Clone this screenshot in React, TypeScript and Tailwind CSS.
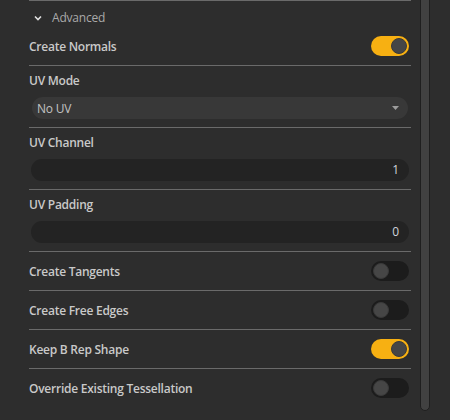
import React from "react";

const font = { fontFamily: '"Open Sans", "Noto Sans", sans-serif' };

function Toggle({ on }: { on: boolean }) {
  return (
    <div
      className={`mr-[2px] flex h-[20px] w-[38px] items-center rounded-full px-[2px] ${
        on ? "justify-end bg-[#f7b012]" : "justify-start bg-[#1c1c1c]"
      }`}
    >
      <div className="h-[16px] w-[16px] rounded-full border border-[#3a3a3a] bg-[#464646]" />
    </div>
  );
}

function Divider() {
  return <div className="h-px bg-[#6a6a6a]" />;
}

function ToggleRow({ label, on }: { label: string; on: boolean }) {
  return (
    <div className="flex h-[38px] items-center justify-between">
      <span className="pt-[2px] text-[12px] font-semibold tracking-[-0.25px] text-[#c9c9c9]">
        {label}
      </span>
      <Toggle on={on} />
    </div>
  );
}

function NumberField({ label, value }: { label: string; value: string }) {
  return (
    <div className="pt-[7px] pb-[8px]">
      <div className="h-[16px] text-[12px] leading-[16px] font-semibold tracking-[-0.25px] text-[#c9c9c9]">
        {label}
      </div>
      <div className="mx-[2px] mt-[8px] flex h-[22px] items-center justify-end rounded-full bg-[#232323] pr-[10px] text-[12px] text-[#cfd4dc]">
        {value}
      </div>
    </div>
  );
}

export default function App() {
  return (
    <div className="flex h-[420px] w-[450px] overflow-hidden bg-[#2d2d2d]" style={font}>
      <div className="ml-[29px] w-[382px] flex-none">
        <Divider />
        {/* Advanced header */}
        <div className="flex h-[26px] items-center gap-[10px] pt-[7px] pl-[5px]">
          <svg width="8" height="6" viewBox="0 0 8 6" className="text-[#e0e0e0]">
            <path d="M1 1.5 L4 4.5 L7 1.5" fill="none" stroke="currentColor" strokeWidth="1.6" />
          </svg>
          <span className="pt-[1px] text-[12px] tracking-[-0.2px] text-[#a9a9a9]">Advanced</span>
        </div>
        <ToggleRow label="Create Normals" on />
        <Divider />

        {/* UV Mode */}
        <div className="pt-[7px] pb-[8px]">
          <div className="h-[16px] text-[12px] leading-[16px] font-semibold tracking-[-0.25px] text-[#c9c9c9]">
            UV Mode
          </div>
          <div className="mx-[3px] mt-[8px] flex h-[22px] items-center justify-between rounded-full bg-[#383838] pr-[9px] pl-[5px] text-[12px] tracking-[-0.2px] text-[#c2c2c2]">
            <span className="pt-[1px]">No UV</span>
            <svg width="7" height="4" viewBox="0 0 7 4">
              <path d="M0 0 H7 L3.5 4 Z" fill="#9c9c9c" />
            </svg>
          </div>
        </div>
        <Divider />
        <NumberField label="UV Channel" value="1" />
        <Divider />
        <NumberField label="UV Padding" value="0" />
        <Divider />
        <ToggleRow label="Create Tangents" on={false} />
        <Divider />
        <ToggleRow label="Create Free Edges" on={false} />
        <Divider />
        <ToggleRow label="Keep B Rep Shape" on />
        <Divider />
        <ToggleRow label="Override Existing Tessellation" on={false} />
      </div>

      {/* scrollbar */}
      <div className="ml-[9px] w-[10px] flex-none">
        <div className="-mt-[4px] h-[415px] rounded-b-[5px] border border-[#1f1f1f] bg-[#414141]" />
      </div>
    </div>
  );
}
